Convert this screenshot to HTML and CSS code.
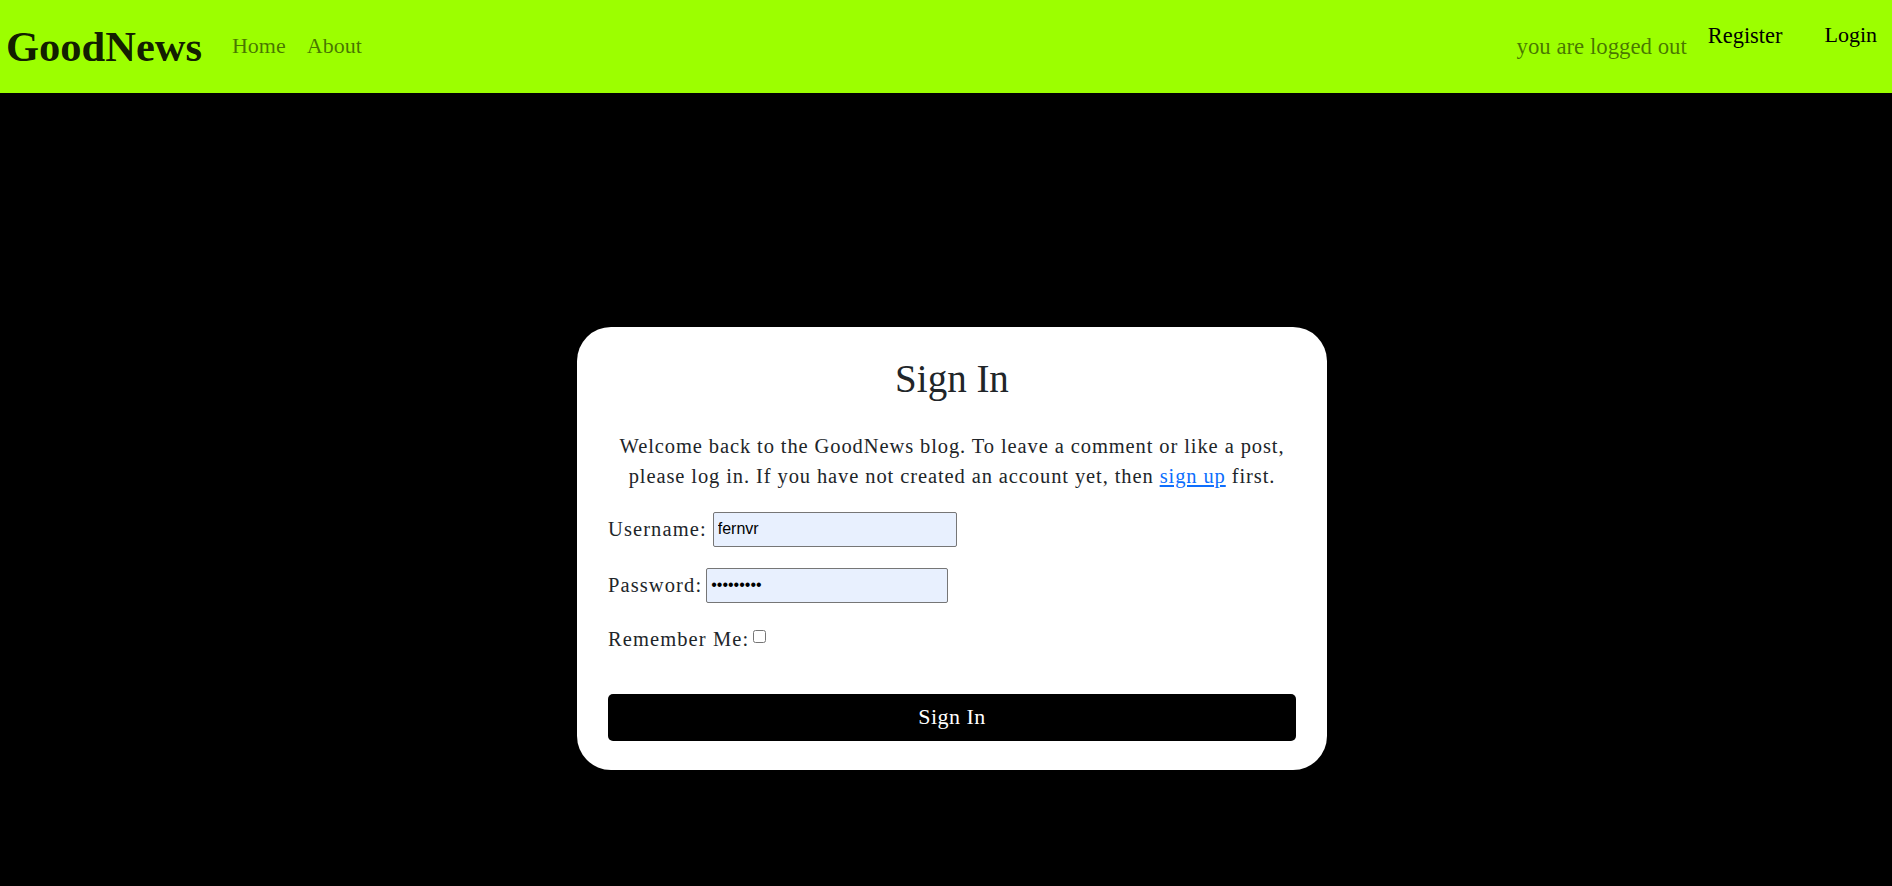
FILE: index.html
```html
<!DOCTYPE html>
<html lang="en">
<head>
<meta charset="utf-8">
<title>GoodNews - Sign In</title>
<link rel="stylesheet" href="styles.css">
</head>
<body>
<header class="topbar">
  <a class="brand" href="#">GoodNews</a>
  <nav class="main-nav">
    <a class="nav-link" href="#">Home</a>
    <a class="nav-link" href="#">About</a>
  </nav>
  <div class="spacer"></div>
  <span class="status">you are logged out</span>
  <a class="account-link register" href="#">Register</a>
  <a class="account-link login" href="#">Login</a>
</header>
<main class="page">
  <section class="card">
    <h1 class="card-title">Sign In</h1>
    <p class="intro">Welcome back to the GoodNews blog. To leave a comment or like a post, please log in. If you have not created an account yet, then <a href="#">sign up</a> first.</p>
    <form class="login-form">
      <div class="field">
        <label for="user">Username:</label>
        <input id="user" class="text-input user" type="text" value="fernvr">
      </div>
      <div class="field pass-field">
        <label for="pass">Password:</label>
        <input id="pass" class="text-input pass" type="password" value="fernvrpas">
      </div>
      <div class="field remember">
        <label for="rem">Remember Me:</label>
        <input id="rem" class="check" type="checkbox">
      </div>
      <button class="submit" type="button">Sign In</button>
    </form>
  </section>
</main>
</body>
</html>
```
FILE: styles.css
```css
html, body {
  margin: 0;
  padding: 0;
  background: #000;
  height: 100%;
}
body {
  font-family: "Liberation Serif", "Times New Roman", serif;
  color: #212529;
}
a { text-decoration: none; }

.topbar {
  display: flex;
  align-items: flex-start;
  height: 93px;
  background: #9cff00;
  padding: 0 15px 0 6px;
  box-sizing: border-box;
}
.brand {
  font-size: 42.5px;
  line-height: 1.2;
  font-weight: bold;
  color: rgba(0, 0, 0, 0.9);
  margin-top: 21px;
}
.main-nav {
  display: flex;
  gap: 21px;
  margin-left: 30px;
  margin-top: 33px;
}
.nav-link {
  font-size: 22px;
  line-height: 1.2;
  color: rgba(0, 0, 0, 0.55);
}
.spacer { flex: 1; }
.status {
  font-size: 22.8px;
  line-height: 1.2;
  color: rgba(0, 0, 0, 0.55);
  margin-top: 33px;
}
.account-link {
  font-size: 22px;
  line-height: 1.2;
  color: #000;
}
.register {
  margin-left: 21px;
  margin-top: 23px;
  font-size: 22.4px;
}
.login {
  margin-left: 42px;
  margin-top: 22px;
}

.page {
  display: flex;
  justify-content: center;
  padding: 234px 0 0 12px;
}
.card {
  width: 750px;
  box-sizing: border-box;
  background: #fff;
  border-radius: 34px;
  padding: 29px 31px 29px;
}
.card-title {
  margin: 0;
  text-align: center;
  font-size: 39px;
  line-height: 1.2;
  font-weight: normal;
  color: #212529;
}
.intro {
  margin: 28px 0 0;
  text-align: center;
  font-size: 20.5px;
  line-height: 30px;
  letter-spacing: 0.9px;
}
.intro a {
  color: #0d6efd;
  text-decoration: underline;
}

.login-form {
  display: flex;
  flex-direction: column;
  gap: 21px;
  margin-top: 21px;
}
.field {
  display: flex;
  align-items: center;
  gap: 6px;
  font-size: 20.5px;
  line-height: 30px;
  letter-spacing: 1.1px;
}
.pass-field { gap: 4px; }
.text-input {
  box-sizing: border-box;
  height: 35px;
  width: 244px;
  padding: 0 4px;
  border: 1px solid #767676;
  border-radius: 2px;
  background: #e8f0fe;
  font-family: "Liberation Sans", Arial, sans-serif;
  font-size: 16px;
  letter-spacing: 0;
  color: #000;
}
.pass { width: 242px; }
.remember { gap: 4px; }
.check {
  width: 13px;
  height: 13px;
  margin: 0 0 4px 0;
}
.submit {
  margin-top: 19px;
  height: 47px;
  width: 100%;
  background: #000;
  color: #fff;
  border: none;
  border-radius: 5px;
  font-family: "Liberation Serif", "Times New Roman", serif;
  font-size: 22px;
  letter-spacing: 0.5px;
}
```
